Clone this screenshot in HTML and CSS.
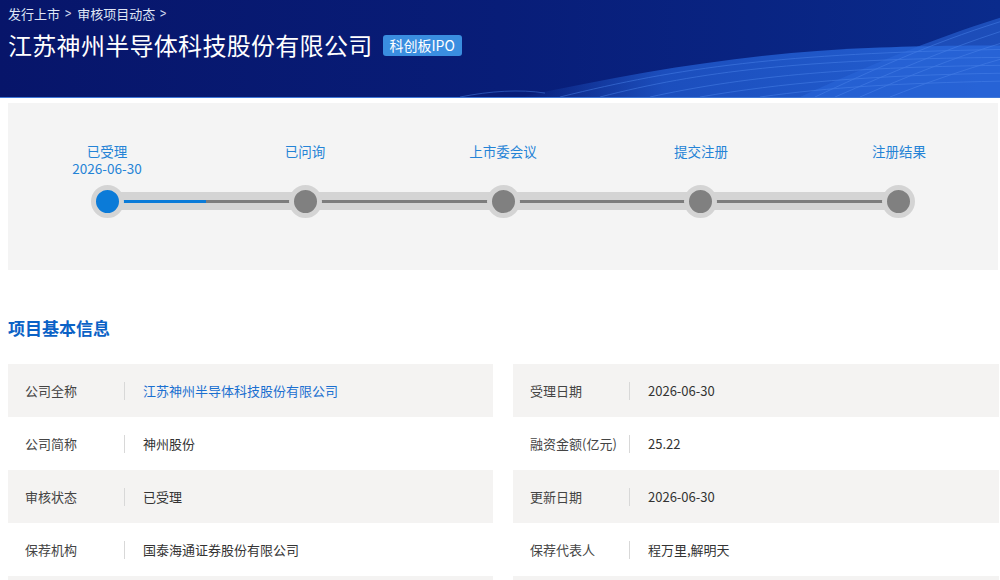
FILE: index.html
```html
<!DOCTYPE html>
<html lang="zh-CN">
<head>
  <meta charset="UTF-8">
  <title>江苏神州半导体科技股份有限公司 | 审核项目动态</title>
  <link rel="stylesheet" href="styles.css">
</head>
<body>
  <div class="hero">
    <svg class="waves" viewBox="0 0 1000 98" preserveAspectRatio="none">
      <defs>
        <linearGradient id="bandA" x1="0" y1="0" x2="1" y2="0">
          <stop offset="0" stop-color="#1f54c4" stop-opacity="0"/>
          <stop offset="0.3" stop-color="#1f56c8" stop-opacity="0.85"/>
          <stop offset="1" stop-color="#2563d6" stop-opacity="0.95"/>
        </linearGradient>
      </defs>
      <path d="M520 98 C650 70 760 52 880 48 C940 46 980 46 1000 46 L1000 98 Z" fill="url(#bandA)"/>
      <path d="M800 98 C860 70 930 40 1000 18 L1000 98 Z" fill="#2a66d8" opacity="0.6"/>
      <g fill="none" stroke="#4d86ec" stroke-width="0.8" opacity="0.6">
        <path d="M560 98 C680 68 780 54 1000 50"/>
        <path d="M600 98 C700 72 800 60 1000 58"/>
        <path d="M650 98 C740 78 840 68 1000 66"/>
        <path d="M700 98 C780 84 870 76 1000 74"/>
        <path d="M760 98 C830 88 900 84 1000 82"/>
        <path d="M815 98 C870 72 930 44 1000 22"/>
        <path d="M835 98 C890 74 945 50 1000 32"/>
        <path d="M860 98 C905 78 955 58 1000 44"/>
        <path d="M890 98 C925 84 965 70 1000 60"/>
        <path d="M460 98 C490 92 520 90 545 94"/>
      </g>
    </svg>
    <div class="crumbs">发行上市<span class="arrow">&gt;</span>审核项目动态<span class="arrow">&gt;</span></div>
    <div class="title-row">
      <h1>江苏神州半导体科技股份有限公司</h1>
      <span class="badge">科创板IPO</span>
    </div>
  </div>

  <div class="page">
    <div class="progress">
      <div class="labels">
        <div class="label"><div>已受理</div><div>2026-06-30</div></div>
        <div class="label">已问询</div>
        <div class="label">上市委会议</div>
        <div class="label">提交注册</div>
        <div class="label">注册结果</div>
      </div>
      <div class="track">
        <span class="dot active"></span>
        <span class="dot"></span>
        <span class="dot"></span>
        <span class="dot"></span>
        <span class="dot"></span>
      </div>
    </div>

    <h2 class="section-title">项目基本信息</h2>

    <div class="info">
      <div class="col">
        <div class="row"><span class="key">公司全称</span><span class="val link">江苏神州半导体科技股份有限公司</span></div>
        <div class="row"><span class="key">公司简称</span><span class="val">神州股份</span></div>
        <div class="row"><span class="key">审核状态</span><span class="val">已受理</span></div>
        <div class="row"><span class="key">保荐机构</span><span class="val">国泰海通证券股份有限公司</span></div>
        <div class="row"></div>
      </div>
      <div class="col">
        <div class="row"><span class="key">受理日期</span><span class="val">2026-06-30</span></div>
        <div class="row"><span class="key">融资金额(亿元)</span><span class="val">25.22</span></div>
        <div class="row"><span class="key">更新日期</span><span class="val">2026-06-30</span></div>
        <div class="row"><span class="key">保荐代表人</span><span class="val">程万里,解明天</span></div>
        <div class="row"></div>
      </div>
    </div>
  </div>
</body>
</html>
```

FILE: styles.css
```css
body {
  margin: 0;
  font-family: "Microsoft YaHei", "Noto Sans CJK SC", "Noto Sans", sans-serif;
  color: #333;
  background: #fff;
  overflow: hidden;
}

.hero {
  position: relative;
  height: 98px;
  padding: 3px 8px 0;
  box-sizing: border-box;
  background: linear-gradient(90deg, #07156a 0%, #081d78 50%, #0a2b8c 100%);
  border-bottom: 1px solid #3f78d8;
  overflow: hidden;
}

.waves {
  position: absolute;
  left: 0;
  top: 0;
  width: 100%;
  height: 100%;
}

.crumbs, .title-row {
  position: relative;
}

.crumbs {
  font-size: 13px;
  line-height: 20px;
  color: #dfe5f5;
}

.crumbs .arrow {
  display: inline-block;
  margin: 0 5px 0 4px;
  font-size: 15px;
  transform: scaleX(0.75);
  color: #cfd7ee;
}

.title-row {
  display: flex;
  align-items: center;
  margin-top: 3px;
}

h1 {
  margin: 0;
  font-size: 24px;
  font-weight: normal;
  line-height: 36px;
  color: #fff;
  letter-spacing: 0.3px;
}

.badge {
  margin-left: 10px;
  padding: 0 7px;
  height: 21px;
  line-height: 21px;
  font-size: 14px;
  color: #fff;
  background: #3a8ee0;
  border-radius: 3px;
}

.page {
  padding: 5px 0 0 8px;
}

.progress {
  width: 990px;
  padding: 40px 0 60px;
  background: #f4f4f4;
}

.labels {
  display: grid;
  grid-template-columns: repeat(5, 1fr);
  height: 34px;
}

.label {
  text-align: center;
  font-size: 13.5px;
  line-height: 17px;
  color: #2483d6;
}

.track {
  display: flex;
  justify-content: space-between;
  align-items: center;
  height: 18px;
  margin: 15px 99px 0;
  background:
    linear-gradient(#0b7bd8, #0b7bd8) 0 8px / 99px 3px no-repeat,
    linear-gradient(#7d7d7d, #7d7d7d) 0 8px / 100% 3px no-repeat,
    #d4d4d4;
}

.dot {
  width: 23px;
  height: 23px;
  margin: 0 -16px;
  border: 5px solid #d4d4d4;
  border-radius: 50%;
  background: #808080;
  flex: none;
}

.dot.active {
  background: #0b7bd8;
}

.section-title {
  margin: 46px 0 24px;
  font-size: 17px;
  line-height: 24px;
  font-weight: bold;
  color: #0b62c6;
}

.info {
  display: flex;
  gap: 20px;
}

.col {
  width: 486px;
}

.col:first-child {
  width: 485px;
}

.row {
  display: flex;
  align-items: center;
  height: 53px;
  font-size: 13px;
}

.row:nth-child(odd) {
  background: #f4f3f2;
}

.key {
  width: 99px;
  padding-left: 17px;
  line-height: 18px;
  border-right: 1px solid #d8d8d8;
  color: #444;
  white-space: nowrap;
}

.val {
  padding-left: 18px;
  color: #333;
}

.val.link {
  color: #1a6fd0;
}
```
